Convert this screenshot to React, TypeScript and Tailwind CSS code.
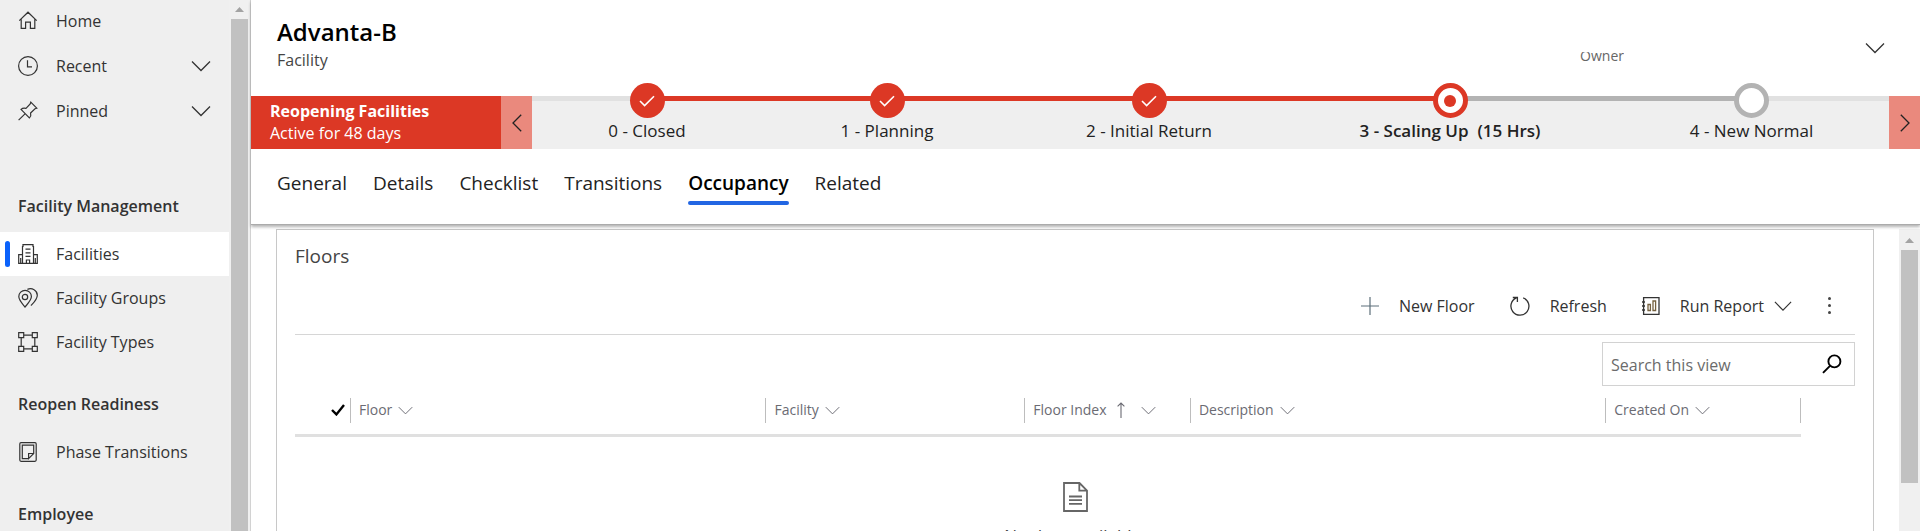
import type { ReactNode } from "react";

function ChevronDown({ className }: { className: string }) {
  return (
    <svg viewBox="0 0 20 12" fill="none" stroke="currentColor" className={className} aria-hidden="true">
      <path d="M1 1.5 L10 10.5 L19 1.5" strokeWidth="1.3" />
    </svg>
  );
}

function Icon({ children }: { children: ReactNode }) {
  return (
    <svg viewBox="0 0 20 20" fill="none" stroke="currentColor" strokeWidth="1.2" className="size-5 shrink-0" aria-hidden="true">
      {children}
    </svg>
  );
}

const HomeIcon = (
  <Icon>
    <path d="M1.3 9.6 L10 1.2 L18.7 9.6 M3.2 8 V17.4 H7.6 V11.2 H12.4 V17.4 H16.8 V8" />
  </Icon>
);
const ClockIcon = (
  <Icon>
    <circle cx="10" cy="10" r="9.4" />
    <path d="M9.5 4.2 V10.8 H14" />
  </Icon>
);
const PinIcon = (
  <Icon>
    <path d="M0.6 19.2 L7 12.8 M12.8 1.2 L18.8 7.2 L17 7.8 L12.6 12 C13.2 14 12.6 15.6 11.4 16.8 L3 8.4 C4.4 7.2 6.2 6.9 8 7.4 L12.2 3 Z" />
  </Icon>
);
const BuildingIcon = (
  <Icon>
    <path d="M4.5 19.3 V2.5 H5 V0.7 H15 V2.5 H15.5 V19.3 M4.5 10.6 H0.7 V19.3 H19.3 V10.6 H15.5 M8.4 19 V16 H11.6 V19 M7.5 5.2 H12.5 M7.5 8.8 H12.5 M7.5 12.4 H12.5 M2.7 14 V19 M17.3 14 V19" />
  </Icon>
);
const PlacesIcon = (
  <Icon>
    <path d="M7 19 C4 15.4 0.8 12.2 0.8 8.6 A6.3 6.3 0 0 1 13.4 8.6 C13.4 12.2 10 15.4 7 19 Z" />
    <circle cx="7" cy="9" r="2.7" />
    <path d="M9.4 1.4 C14 -0.6 19.3 2.4 19.3 7.2 C19.3 11.2 16.4 14 13 17.6" />
  </Icon>
);
const TypesIcon = (
  <Icon>
    <path d="M0.7 0.7 H5.7 V5.7 H0.7 Z M14.3 0.7 H19.3 V5.7 H14.3 Z M0.7 14.3 H5.7 V19.3 H0.7 Z M14.3 14.3 H19.3 V19.3 H14.3 Z M5.7 3.2 H14.3 M5.7 16.8 H14.3 M3.2 5.7 V14.3 M16.8 5.7 V14.3" />
  </Icon>
);
const NoteIcon = (
  <Icon>
    <rect x="1.8" y="0.7" width="16.4" height="18.6" rx="1.2" />
    <path d="M10.6 16.6 H4.3 V3.2 H15.7 V11.5 L10.6 16.6 V11.5 H15.7" />
  </Icon>
);

function NavRow({ icon, label, expandable, active }: { icon: ReactNode; label: string; expandable?: boolean; active?: boolean }) {
  const content = (
    <>
      {active && <span className="absolute left-[5px] top-[9px] h-[26px] w-[5px] rounded-sm bg-[#0b62fb]" />}
      {icon}
      <span className="flex-1 text-left">{label}</span>
      {expandable && <ChevronDown className="h-3 w-5" />}
    </>
  );
  const row = active
    ? "relative flex h-11 w-full items-center gap-[18px] bg-white px-[18px] text-base"
    : "relative flex h-11 w-full items-center gap-[18px] px-[18px] text-base";
  return (
    <li>
      {expandable ? (
        <button type="button" className={row}>{content}</button>
      ) : (
        <a href="#" className={row}>{content}</a>
      )}
    </li>
  );
}

function NavHeading({ children }: { children: string }) {
  return <h2 className="mt-[14px] flex h-[52px] items-center pl-[18px] text-base font-semibold">{children}</h2>;
}

function ScrollArrow({ className }: { className: string }) {
  return (
    <svg viewBox="0 0 9 5" fill="#a3a3a3" className={className} aria-hidden="true">
      <path d="M0 5 L4.5 0 L9 5 Z" />
    </svg>
  );
}

function Sidebar() {
  return (
    <aside className="flex shrink-0 border-r border-[#d2d2d2] bg-[#efefef] text-[#333]">
      <nav className="w-[229px]" aria-label="Site map">
        <ul className="-mt-px flex flex-col gap-px pb-[33px]">
          <NavRow icon={HomeIcon} label="Home" />
          <NavRow icon={ClockIcon} label="Recent" expandable />
          <NavRow icon={PinIcon} label="Pinned" expandable />
        </ul>
        <NavHeading>Facility Management</NavHeading>
        <ul>
          <NavRow icon={BuildingIcon} label="Facilities" active />
          <NavRow icon={PlacesIcon} label="Facility Groups" />
          <NavRow icon={TypesIcon} label="Facility Types" />
        </ul>
        <NavHeading>Reopen Readiness</NavHeading>
        <ul>
          <NavRow icon={NoteIcon} label="Phase Transitions" />
        </ul>
        <NavHeading>Employee</NavHeading>
      </nav>
      <div className="flex w-[21px] flex-col items-center bg-[#f0f0f0]">
        <ScrollArrow className="my-[7px] h-[5px] w-[9px] shrink-0" />
        <div className="w-[17px] flex-1 bg-[#c1c1c1]" />
      </div>
    </aside>
  );
}

type StageState = "done" | "current" | "todo";
const stages: { label: string; state: StageState; before: string; after: string }[] = [
  { label: "0 - Closed", state: "done", before: "bg-[#e1e1e1]", after: "bg-[#dc3825]" },
  { label: "1 - Planning", state: "done", before: "bg-[#dc3825]", after: "bg-[#dc3825]" },
  { label: "2 - Initial Return", state: "done", before: "bg-[#dc3825]", after: "bg-[#dc3825]" },
  { label: "3 - Scaling Up\u00a0 (15 Hrs)", state: "current", before: "bg-[#dc3825]", after: "bg-[#b3b3b3]" },
  { label: "4 - New Normal", state: "todo", before: "bg-[#b3b3b3]", after: "bg-[#e1e1e1]" },
];

function StageMark({ state }: { state: StageState }) {
  if (state === "done") {
    return (
      <span className="flex size-[35px] items-center justify-center rounded-full bg-[#dc3825] text-white">
        <svg viewBox="0 0 16 12" fill="none" stroke="currentColor" strokeWidth="1.6" className="h-3 w-4" aria-hidden="true">
          <path d="M1 6 L5.6 10.6 L15 1.2" />
        </svg>
      </span>
    );
  }
  if (state === "current") {
    return (
      <span className="flex size-[35px] items-center justify-center rounded-full border-5 border-[#dc3825] bg-white">
        <span className="size-3 rounded-full bg-[#dc3825]" />
      </span>
    );
  }
  return <span className="size-[35px] rounded-full border-5 border-[#b3b3b3] bg-white" />;
}

function ProcessBar() {
  return (
    <section className="flex h-[53px] bg-[#efefef]" aria-label="Business process">
      <div className="w-[250px] shrink-0 bg-[#dc3825] pl-[19px] pt-1 text-base leading-[22px] text-white">
        <p className="font-bold">Reopening Facilities</p>
        <p>Active for 48 days</p>
      </div>
      <button type="button" aria-label="Previous stages" className="flex w-[31px] shrink-0 items-center justify-center bg-[#ea897d] text-[#222]">
        <svg viewBox="0 0 10 18" fill="none" stroke="currentColor" strokeWidth="1.3" className="h-[18px] w-[10px]" aria-hidden="true">
          <path d="M9.2 0.8 L1 9 L9.2 17.2" />
        </svg>
      </button>
      <ol className="grid min-w-0 flex-1 grid-cols-[230fr_250fr_274fr_328fr_275fr]">
        {stages.map((s) => (
          <li key={s.label} className="relative flex flex-col">
            <div className="flex h-[5px]">
              <span className={`flex-1 ${s.before}`} />
              <span className={`flex-1 ${s.after}`} />
            </div>
            <span className="absolute inset-x-0 -top-[13px] flex justify-center">
              <StageMark state={s.state} />
            </span>
            <span
              className={
                s.state === "current"
                  ? "mt-[18px] text-center text-[17px] leading-6 font-semibold text-[#222]"
                  : "mt-[18px] text-center text-[17px] leading-6 text-[#222]"
              }
            >
              {s.label}
            </span>
          </li>
        ))}
      </ol>
      <button type="button" aria-label="Next stages" className="flex w-[31px] shrink-0 items-center justify-center bg-[#ea897d] text-[#222]">
        <svg viewBox="0 0 10 18" fill="none" stroke="currentColor" strokeWidth="1.3" className="h-[18px] w-[10px]" aria-hidden="true">
          <path d="M0.8 0.8 L9 9 L0.8 17.2" />
        </svg>
      </button>
    </section>
  );
}

const tabs = ["General", "Details", "Checklist", "Transitions", "Occupancy", "Related"];

function Tabs() {
  return (
    <div role="tablist" className="flex h-[75px] gap-[26px] pt-[19px] pl-[26px] text-[19px] leading-[30px] text-[#222]">
      {tabs.map((t) =>
        t === "Occupancy" ? (
          <button key={t} type="button" role="tab" aria-selected="true" className="flex flex-col font-semibold text-black">
            {t}
            <span className="mt-[3px] h-1 w-full rounded-sm bg-[#2266e3]" />
          </button>
        ) : (
          <button key={t} type="button" role="tab" aria-selected="false" className="flex flex-col">
            {t}
          </button>
        ),
      )}
    </div>
  );
}

function Toolbar() {
  return (
    <div className="flex h-[55px] items-center justify-end border-b border-[#d6d6d6] pr-6 pb-[3px] text-base text-[#333]">
      <button type="button" className="mr-[35px] flex items-center gap-5">
        <svg viewBox="0 0 18 18" fill="none" stroke="#5d6f7a" strokeWidth="1.2" className="size-[18px]" aria-hidden="true">
          <path d="M9 0 V18 M0 9 H18" />
        </svg>
        New Floor
      </button>
      <button type="button" className="mr-[35px] flex items-center gap-5">
        <svg viewBox="0 0 20 20" fill="none" stroke="currentColor" strokeWidth="1.3" className="size-5" aria-hidden="true">
          <path d="M13.2 1.8 A9 9 0 1 1 6.4 1.9 M2.8 1.5 H7.4 V6" />
        </svg>
        Refresh
      </button>
      <button type="button" className="mr-[35px] flex items-center gap-5">
        <svg viewBox="0 0 18 18" fill="none" stroke="currentColor" strokeWidth="1.3" className="size-[18px]" aria-hidden="true">
          <path d="M1.6 0.7 H17 V17.3 H1.6 Z M0 5 H3 M0 9 H3 M0 13 H3" />
          <path d="M6 7.5 H8.4 V13.5 H6 Z M11 4 H13.6 V13.5 H11 Z" stroke="#75613f" />
        </svg>
        <span className="flex items-center gap-[10px]">
          Run Report
          <ChevronDown className="h-3 w-[18px]" />
        </span>
      </button>
      <button type="button" aria-label="More commands" className="flex h-6 w-1 flex-col items-center justify-center gap-1">
        <span className="size-[3px] rounded-full bg-[#444]" />
        <span className="size-[3px] rounded-full bg-[#444]" />
        <span className="size-[3px] rounded-full bg-[#444]" />
      </button>
    </div>
  );
}

const columns = [
  { label: "Floor", width: "w-[27.6%]" },
  { label: "Facility", width: "w-[17.2%]" },
  { label: "Floor Index", width: "w-[11%]", sorted: true },
  { label: "Description", width: "w-[27.6%]" },
  { label: "Created On", width: "w-[13%]", last: true },
];

function FloorsTable() {
  return (
    <div className="pr-[54px]">
      <table className="w-full table-fixed border-collapse text-sm text-[#6b6b73]">
        <thead>
          <tr className="border-b-[3px] border-[#e0e0e0]">
            <th scope="col" className="w-[55px] p-0">
              <button type="button" aria-label="Select all" className="flex h-12 w-full items-center justify-end pr-[5px] text-black">
                <svg viewBox="0 0 14 12" fill="none" stroke="currentColor" strokeWidth="2.4" className="h-3 w-[14px]" aria-hidden="true">
                  <path d="M1 6 L5.4 10.4 L13 1" />
                </svg>
              </button>
            </th>
            {columns.map((c) => (
              <th key={c.label} scope="col" className={`p-0 font-normal ${c.width}`}>
                <div
                  className={
                    c.last
                      ? "flex h-[25px] items-center border-x border-[#bdbdbd] pl-2"
                      : "flex h-[25px] items-center border-l border-[#bdbdbd] pl-2"
                  }
                >
                  <button type="button" className="flex items-center gap-[6px] whitespace-nowrap">
                    {c.label}
                    {c.sorted && (
                      <svg viewBox="0 0 8 16" fill="none" stroke="currentColor" className="mr-2.5 ml-1 h-4 w-2" aria-hidden="true">
                        <path d="M4 16 V1 M0.6 4.4 L4 1 L7.4 4.4" strokeWidth="1.1" />
                      </svg>
                    )}
                    <ChevronDown className="h-[9px] w-[15px]" />
                  </button>
                </div>
              </th>
            ))}
          </tr>
        </thead>
      </table>
    </div>
  );
}

export default function App() {
  return (
    <div className="flex h-screen overflow-hidden bg-white font-['Open_Sans','Noto_Sans',sans-serif] text-[#333]">
      <Sidebar />
      <main className="flex min-w-0 flex-1 flex-col">
        <header className="relative z-10 shrink-0 border-b border-[#ababab] bg-white shadow-[0_2px_3px_rgba(0,0,0,0.3)]">
          <div className="flex h-24 items-start justify-between pl-[26px] pr-[35px]">
            <div className="pt-4">
              <h1 className="text-2xl leading-8 font-semibold text-black">Advanta-B</h1>
              <p className="text-base leading-6 font-medium text-[#444]">Facility</p>
            </div>
            <div className="flex pt-[42px]">
              <div className="mt-[10px] mr-[241px] h-5 overflow-hidden">
                <p className="-mt-[5px] text-sm leading-[18px] text-[#666]">Owner</p>
              </div>
              <button type="button" aria-label="Expand header" className="h-3">
                <ChevronDown className="h-3 w-5" />
              </button>
            </div>
          </div>
          <ProcessBar />
          <Tabs />
        </header>
        <div className="flex min-h-0 flex-1">
          <div className="mt-1 mr-[25px] ml-[25px] min-w-0 flex-1 overflow-hidden border border-b-0 border-[#c8c8c8] px-[18px]">
            <h2 className="pt-3 text-[19px] leading-7 text-[#444]">Floors</h2>
            <div className="mt-2.5">
              <Toolbar />
            </div>
            <div className="mt-[7px] flex justify-end">
              <label className="flex h-11 w-[253px] items-center border border-[#d2d2d2] pr-3 pl-2">
                <input type="text" aria-label="Search this view" placeholder="Search this view" className="min-w-0 flex-1 bg-transparent pt-0.5 text-base outline-none placeholder:text-[#6b6b6b]" />
                <svg viewBox="0 0 20 20" fill="none" stroke="#000" strokeWidth="1.9" className="size-5" aria-hidden="true">
                  <circle cx="12.4" cy="7.4" r="6" />
                  <path d="M8 11.8 L1 18.8" />
                </svg>
              </label>
            </div>
            <FloorsTable />
            <div className="mt-[45px] flex flex-col items-center">
              <svg viewBox="0 0 25 30" fill="none" stroke="#666" strokeWidth="1.8" className="h-[30px] w-[25px]" aria-hidden="true">
                <path d="M1 1 H16.5 L24 8.5 V29 H1 Z M16.3 1 V8.7 H24 M6 14.5 H19 M6 18.2 H19 M6 21.9 H19" />
              </svg>
              <p className="mt-3 text-[17px] leading-6 text-[#444]">No data available.</p>
            </div>
          </div>
          <div className="mt-1 flex w-[21px] shrink-0 flex-col items-center bg-[#f0f0f0]">
            <ScrollArrow className="mt-[9px] mb-[7px] h-[5px] w-[9px] shrink-0" />
            <div className="h-[77%] w-[17px] bg-[#c1c1c1]" />
          </div>
        </div>
      </main>
    </div>
  );
}
